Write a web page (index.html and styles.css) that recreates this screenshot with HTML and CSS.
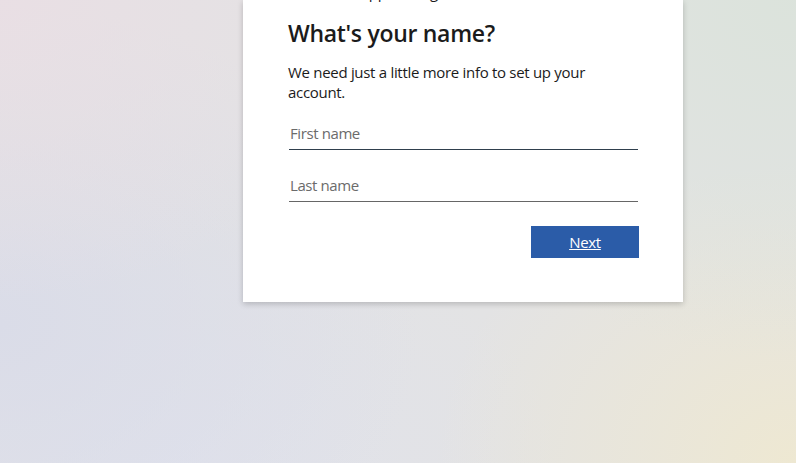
FILE: index.html
```html
<!DOCTYPE html>
<html lang="en">
<head>
<meta charset="utf-8">
<title>What's your name?</title>
<link rel="stylesheet" href="styles.css">
</head>
<body>
<div class="page">
  <div class="card">
    <div class="identity">Support's sign-in</div>
    <h1 class="title">What's your name?</h1>
    <p class="desc">We need just a little more info to set up your account.</p>
    <div class="field"><input class="input" type="text" placeholder="First name"></div>
    <div class="field"><input class="input input-last" type="text" placeholder="Last name"></div>
    <div class="actions"><button class="btn" type="button">Next</button></div>
  </div>
</div>
</body>
</html>
```
FILE: styles.css
```css
html, body {
  margin: 0;
  padding: 0;
  height: 100%;
}
body {
  font-family: "Open Sans", "Noto Sans", sans-serif;
  color: #1b1b1b;
  overflow: hidden;
  background-color: #e3e3e4;
  background-image:
    radial-gradient(ellipse 380px 300px at 0% 0%, rgba(234, 222, 228, 0.85), rgba(234, 222, 228, 0) 100%),
    radial-gradient(ellipse 420px 360px at 100% 0%, rgba(218, 227, 218, 0.85), rgba(218, 227, 218, 0) 100%),
    radial-gradient(ellipse 360px 300px at 100% 100%, rgba(238, 232, 210, 1), rgba(238, 232, 210, 0) 100%),
    radial-gradient(ellipse 420px 320px at 0% 70%, rgba(218, 220, 232, 1), rgba(218, 220, 232, 0) 100%),
    radial-gradient(ellipse 400px 260px at 20% 100%, rgba(224, 226, 236, 1), rgba(224, 226, 236, 0) 100%);
}
.page {
  display: flex;
  padding-left: 243px;
}
.card {
  width: 440px;
  box-sizing: border-box;
  padding: 0 44px 44px 45px;
  background: #fff;
  box-shadow: 0 2px 6px rgba(0, 0, 0, 0.2);
  display: flex;
  flex-direction: column;
}
.identity {
  font-size: 15px;
  line-height: 20px;
  height: 20px;
  margin-top: -18px;
  padding-left: 64px;
  letter-spacing: -0.3px;
  color: #1b1b1b;
}
.title {
  font-size: 23px;
  line-height: 28px;
  font-weight: 600;
  letter-spacing: -0.3px;
  margin: 17px 0 0;
  color: #1b1b1b;
}
.desc {
  font-size: 15px;
  line-height: 20px;
  letter-spacing: -0.3px;
  margin: 15px 0 0;
  color: #1b1b1b;
}
.field {
  margin-top: 12px;
}
.field + .field {
  margin-top: 16px;
}
.input {
  display: block;
  width: 349px;
  height: 36px;
  box-sizing: border-box;
  border: 0;
  border-bottom: 1px solid #2f3f4d;
  padding: 3px 1px 0;
  margin: 0 0 0 1px;
  font-family: inherit;
  font-size: 15px;
  letter-spacing: -0.4px;
  color: #1b1b1b;
  background: transparent;
  outline: none;
}
.input-last {
  border-bottom-color: #666;
}
.input::placeholder {
  color: #6b6b6b;
}
.actions {
  display: flex;
  justify-content: flex-end;
  margin-top: 24px;
}
.btn {
  width: 108px;
  height: 32px;
  border: 0;
  background: #2b5ca8;
  color: #fff;
  font-family: inherit;
  font-size: 15px;
  letter-spacing: -0.3px;
  text-decoration: underline;
  cursor: pointer;
  padding: 0;
}
```
